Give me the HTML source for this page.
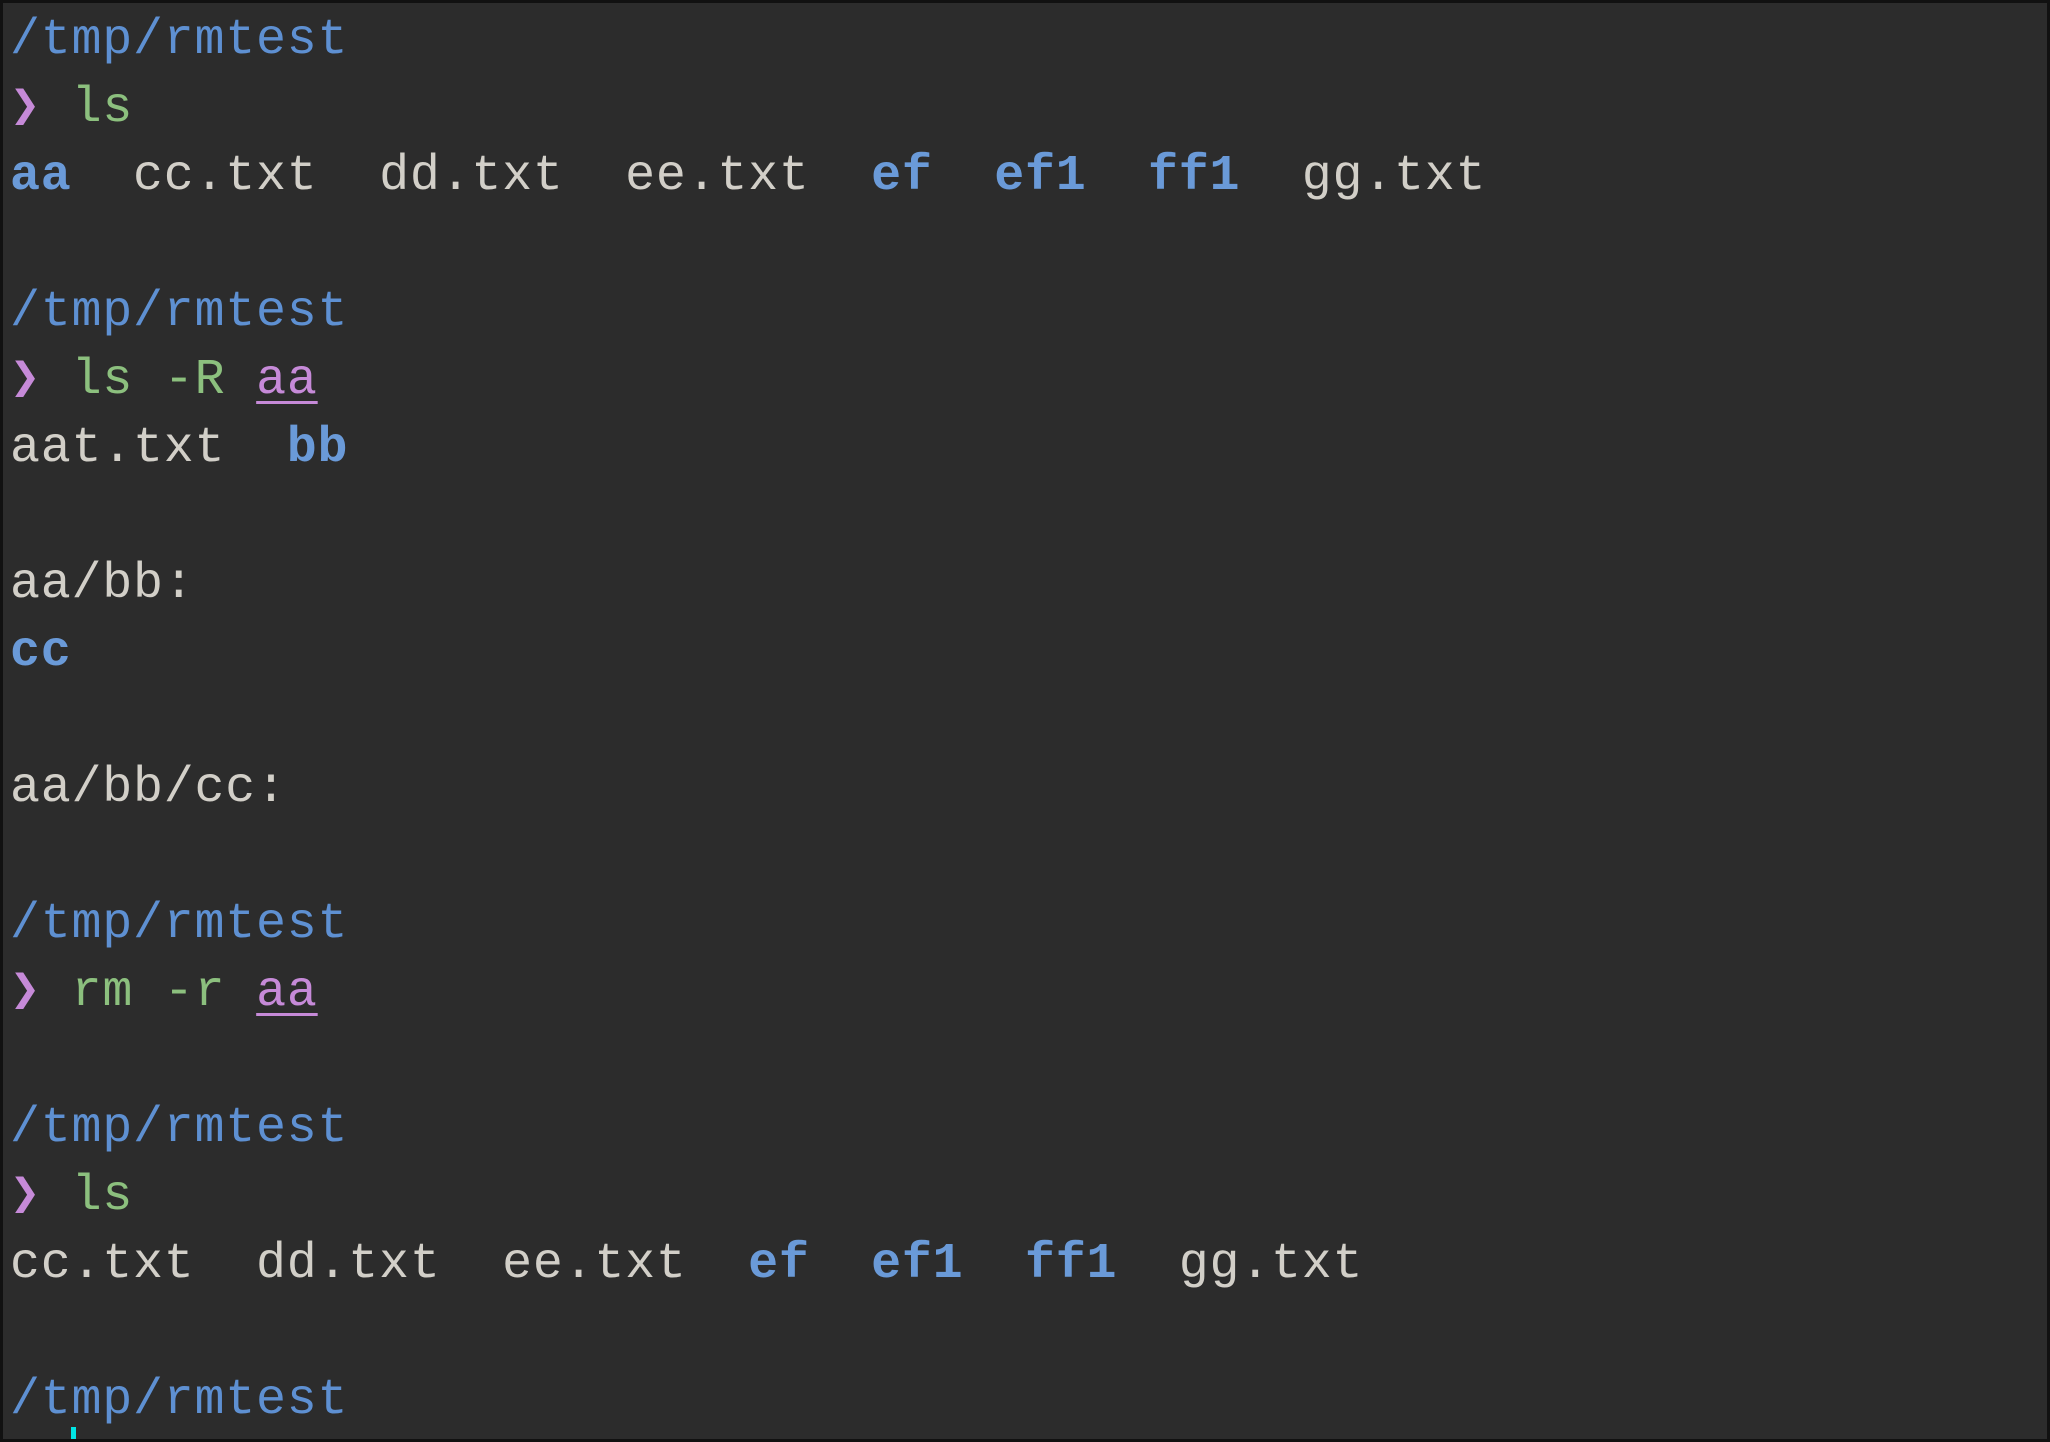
<!DOCTYPE html>
<html><head><meta charset="utf-8"><style>
html,body{margin:0;padding:0;}
body{width:2050px;height:1442px;background:#111;overflow:hidden;}
.t{position:absolute;left:3px;top:3px;width:2044px;height:1436px;background:#2c2c2c;}
pre{margin:0;position:absolute;left:10px;top:7px;font-family:"Liberation Mono",monospace;font-size:50px;line-height:68px;color:#d2cfc8;letter-spacing:0.75px;}
.b{color:#5e90d2}.d{color:#6a9ad8;font-weight:bold}.g{color:#8cc07e}.p{color:#c68ad8}
.u{color:#c68ad8;text-decoration:underline;text-underline-offset:8px;text-decoration-thickness:3px}
.cur{position:absolute;left:71px;top:1427px;width:5px;height:12px;background:#00e5e5}
</style></head><body><div class="t"></div>
<pre><span class="b">/tmp/rmtest</span>
<span class="p">❯</span> <span class="g">ls</span>
<span class="d">aa</span>  cc.txt  dd.txt  ee.txt  <span class="d">ef</span>  <span class="d">ef1</span>  <span class="d">ff1</span>  gg.txt

<span class="b">/tmp/rmtest</span>
<span class="p">❯</span> <span class="g">ls -R</span> <span class="u">aa</span>
aat.txt  <span class="d">bb</span>

aa/bb:
<span class="d">cc</span>

aa/bb/cc:

<span class="b">/tmp/rmtest</span>
<span class="p">❯</span> <span class="g">rm -r</span> <span class="u">aa</span>

<span class="b">/tmp/rmtest</span>
<span class="p">❯</span> <span class="g">ls</span>
cc.txt  dd.txt  ee.txt  <span class="d">ef</span>  <span class="d">ef1</span>  <span class="d">ff1</span>  gg.txt

<span class="b">/tmp/rmtest</span></pre>
<div class="cur"></div>
</body></html>
